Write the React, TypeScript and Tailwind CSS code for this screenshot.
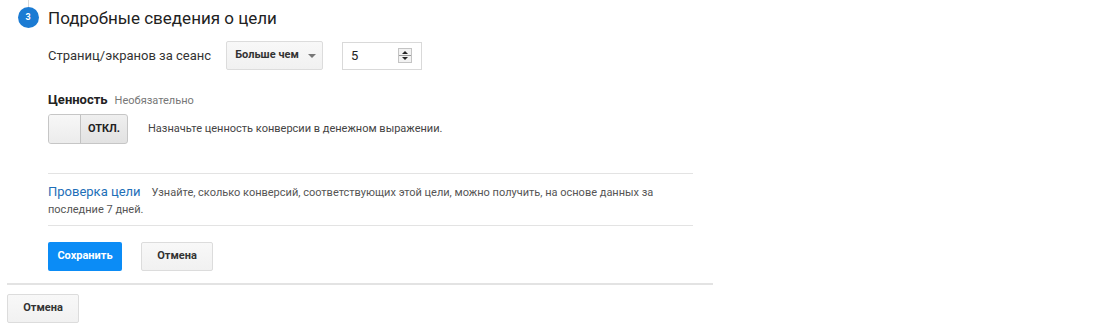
import { useState } from "react";

// Кнопка серого стиля (Отмена, Больше чем)
function GrayButton({ children, className = "" }: { children: React.ReactNode; className?: string }) {
  return (
    <button
      className={
        "h-[29px] rounded-[2px] border border-[#dcdcdc] bg-gradient-to-b from-[#f8f8f8] to-[#f1f1f1] text-[11px] font-bold text-[#333] " +
        className
      }
    >
      {children}
    </button>
  );
}

function Spinner() {
  return (
    <svg width="14" height="15" viewBox="0 0 14 15" className="shrink-0">
      <rect x="0.5" y="0.5" width="13" height="14" fill="#f2f2f2" stroke="#c4c4c4" />
      <line x1="1" y1="7.5" x2="13" y2="7.5" stroke="#9a9a9a" />
      <path d="M4 6 L7 3 L10 6 Z" fill="#222" />
      <path d="M4 9 L7 12 L10 9 Z" fill="#222" />
    </svg>
  );
}

export default function App() {
  const [value, setValue] = useState("5");
  const [enabled] = useState(false);

  return (
    <div className="w-[1100px] h-[331px] bg-white font-['Roboto',_'Liberation_Sans',_sans-serif] text-[#333] overflow-hidden">
      {/* Заголовок шага */}
      <div className="flex items-start pl-[17px]">
        <div className="flex w-[22px] flex-col items-center">
          <div className="h-[7px] w-px bg-[#dadada]" />
          <div className="grid h-[21px] w-[21px] place-items-center rounded-full bg-[#1b7bd3] text-[9px] font-bold text-white">
            3
          </div>
        </div>
        <h2 className="ml-[9px] mt-[8px] text-[17px] leading-[20px] text-[#222]">Подробные сведения о цели</h2>
      </div>

      <div className="w-[693px] pl-[48px]">
        {/* Условие */}
        <div className="mt-[13px] flex items-center">
          <span className="w-[178px] text-[13px] text-[#333]">Страниц/экранов за сеанс</span>
          <GrayButton className="flex w-[97px] items-center justify-center gap-[9px] pl-[2px]">
            <span>Больше чем</span>
            <svg width="8" height="4" viewBox="0 0 8 4">
              <path d="M0 0 L8 0 L4 4 Z" fill="#777" />
            </svg>
          </GrayButton>
          <div className="ml-[19px] flex h-[28px] w-[80px] items-center border border-[#d9d9d9] bg-white pl-[8px] pr-[9px]">
            <input
              value={value}
              onChange={(e) => setValue(e.target.value)}
              className="w-full min-w-0 bg-transparent text-[13px] text-[#222] outline-none"
            />
            <Spinner />
          </div>
        </div>

        {/* Ценность */}
        <div className="mt-[20px] flex items-baseline gap-[7px] leading-[20px]">
          <span className="text-[13px] font-bold text-[#222]">Ценность</span>
          <span className="text-[11px] text-[#777]">Необязательно</span>
        </div>
        <div className="mt-[3px] flex items-center">
          <div className="flex h-[30px] w-[80px] overflow-hidden rounded-[3px] border border-[#c6c6c6] bg-gradient-to-b from-[#efefef] to-[#e2e2e2]">
            <div className="w-[32px] border-r border-[#c2c2c2] bg-gradient-to-b from-[#f7f7f7] to-[#ececec]" />
            <div className="grid flex-1 place-items-center text-[11px] font-bold text-[#222]">
              {enabled ? "ВКЛ." : "ОТКЛ."}
            </div>
          </div>
          <span className="ml-[20px] text-[11px] text-[#444]">Назначьте ценность конверсии в денежном выражении.</span>
        </div>

        {/* Проверка цели */}
        <div className="mt-[29px] border-t border-b border-[#e3e3e3] pt-[10px] pb-[7px]">
          <p className="text-[11px] leading-[17px] text-[#555]">
            <span className="mr-[11px] text-[13px] leading-[13px] text-[#1e6fb8]">Проверка цели</span>
            Узнайте, сколько конверсий, соответствующих этой цели, можно получить, на основе данных за последние 7 дней.
          </p>
        </div>

        <div className="mt-[16px] flex gap-[19px]">
          <button className="h-[29px] w-[74px] rounded-[2px] bg-[#0b8cf6] text-[11px] font-bold text-white">
            Сохранить
          </button>
          <GrayButton className="w-[72px]">Отмена</GrayButton>
        </div>
      </div>

      <div className="ml-[7px] mt-[12px] h-[2px] w-[706px] bg-[#e3e3e3]" />
      <GrayButton className="ml-[7px] mt-[9px] w-[72px]">Отмена</GrayButton>
    </div>
  );
}
